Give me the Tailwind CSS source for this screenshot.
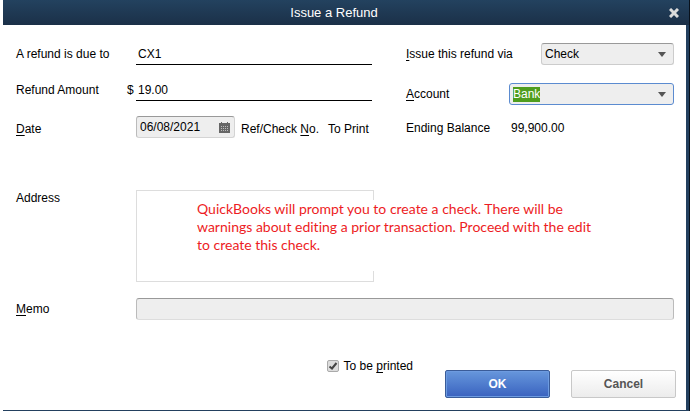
<!doctype html>
<html lang="en">
  <head>
    <meta charset="UTF-8" />
    <meta name="viewport" content="width=device-width, initial-scale=1.0" />
    <title>Issue a Refund</title>
    <script src="https://cdn.jsdelivr.net/npm/@tailwindcss/browser@4"></script>
  </head>
  <body class="bg-white pl-[3px] pr-px font-['Liberation_Sans',Arial,sans-serif] text-xs text-black">
    <div class="border-r border-[#08111c] bg-white">
      <header
        class="flex h-[25px] items-center bg-linear-to-b from-[#23425f] to-[#1b3048] text-white"
      >
        <h1 class="flex-1 text-center text-[13px]">Issue a Refund</h1>
        <button type="button" aria-label="Close" class="w-6 pl-1">
          <svg class="h-[10px] w-[10px]" viewBox="0 0 10 10" stroke="#dcdcdc" stroke-width="3">
            <path d="M1 1 9 9M9 1 1 9" />
          </svg>
        </button>
      </header>

      <form class="border-r-3 border-b border-[#23405f]">
        <div class="pt-[18px] pr-3 pl-[13px]">
          <div class="flex gap-8">
            <!-- Refund details -->
            <div class="w-[358px] shrink-0">
              <div class="flex h-[22px] items-center pr-0.5">
                <label for="payee" class="w-[120px]">A refund is due to</label>
                <input
                  id="payee"
                  value="CX1"
                  class="h-full min-w-0 flex-1 border-b border-black px-0.5 outline-none"
                />
              </div>

              <div class="mt-[14px] flex h-[22px] items-center pr-0.5">
                <label for="amount" class="w-[111px]">Refund Amount</label>
                <span class="w-[9px]">$</span>
                <input
                  id="amount"
                  value="19.00"
                  class="h-full min-w-0 flex-1 border-b border-black px-0.5 outline-none"
                />
              </div>

              <div class="mt-[15px] flex h-[22px] items-center">
                <label for="date" class="w-[120px] pt-1"><u class="underline-offset-2">D</u>ate</label>
                <div
                  class="flex h-full w-[99px] items-center rounded-[3px] border border-[#d4d4d4] border-t-[#999] border-l-[#bbb] bg-[#eee] pr-1 pl-[3px]"
                >
                  <input id="date" value="06/08/2021" class="min-w-0 flex-1 outline-none" />
                  <button type="button" aria-label="Pick a date">
                    <svg class="h-[11px] w-[11px]" viewBox="0 0 11 11">
                      <path fill="#666" d="M0 1h2V0h1v1h5V0h1v1h2v10H0z" />
                      <path
                        stroke="#bbb"
                        stroke-dasharray="1 1"
                        d="M2 4.5h8M2 6.5h8M2 8.5h8"
                      />
                    </svg>
                  </button>
                </div>
                <span class="pt-1 pl-1.5">Ref/Check <u class="underline-offset-2">N</u>o.</span>
                <span class="pt-1 pl-[9px]">To Print</span>
              </div>
            </div>

            <!-- Payment method -->
            <div class="min-w-0 flex-1">
              <div class="flex h-[22px] items-center">
                <label for="via" class="w-[135px]"><u class="underline-offset-2">I</u>ssue this refund via</label>
                <div
                  class="flex h-full flex-1 items-center rounded-[3px] border border-[#ccc] border-t-[#999] bg-[#eee] pr-[7px] pl-[3px]"
                >
                  <select id="via" class="min-w-0 flex-1 appearance-none outline-none">
                    <option>Check</option>
                  </select>
                  <svg class="h-[5px] w-2" viewBox="0 0 8 5"><path fill="#555" d="M0 0h8L4 5z" /></svg>
                </div>
              </div>

              <div class="mt-[18px] flex h-[22px] items-center">
                <label for="account" class="w-[103px]"><u class="underline-offset-2">A</u>ccount</label>
                <div
                  class="flex h-full flex-1 items-center justify-between rounded-[3px] border border-[#5b8bd0] bg-[#eee] pr-[7px] pl-[3px]"
                >
                  <select
                    id="account"
                    class="field-sizing-content h-[15px] appearance-none bg-[#4f9d1d] leading-[15px] text-white outline-none"
                  >
                    <option>Bank</option>
                  </select>
                  <svg class="h-[5px] w-2" viewBox="0 0 8 5"><path fill="#555" d="M0 0h8L4 5z" /></svg>
                </div>
              </div>

              <div class="mt-3 flex h-[22px] items-center">
                <span class="w-[105px]">Ending Balance</span>
                <span>99,900.00</span>
              </div>
            </div>
          </div>

          <div class="relative mt-[51px] flex">
            <label for="address" class="w-[120px] leading-4">Address</label>
            <textarea
              id="address"
              class="h-[92px] w-[238px] resize-none border border-[#ddd] outline-none"
            ></textarea>
            <!-- Help note laid over the address box -->
            <p
              class="absolute top-[10px] left-[181px] h-[71px] w-[420px] bg-white font-[Lato,sans-serif] text-sm leading-[18px] text-[#ed1c24] [font-variant-ligatures:none]"
            >
              QuickBooks will prompt you to create a check. There will be<br />
              warnings about editing a prior transaction. Proceed with the edit<br />
              to create this check.
            </p>
          </div>

          <div class="mt-4 flex h-[22px] items-center">
            <label for="memo" class="w-[120px]"><u class="underline-offset-2">M</u>emo</label>
            <input
              id="memo"
              class="h-full min-w-0 flex-1 rounded-[3px] border border-[#ddd] border-t-[#999] border-r-[#bbb] border-l-[#bbb] bg-[#eee] px-1 outline-none"
            />
          </div>
        </div>

        <div class="flex justify-end pt-[38px] pr-[10px] pb-3">
          <label class="mr-8 flex h-4 items-center gap-[5px]">
            <span class="relative flex">
              <input
                type="checkbox"
                checked
                class="h-3 w-3 appearance-none rounded-[2px] border border-[#aaa] bg-[#ddd]"
              />
              <svg
                class="pointer-events-none absolute inset-0 h-3 w-3"
                viewBox="0 0 12 12"
                fill="none"
                stroke="#444"
                stroke-width="2"
              >
                <path d="M2.5 6.5 5 8.5 9.5 3" />
              </svg>
            </span>
            <span>To be <u class="underline-offset-2">p</u>rinted</span>
          </label>
          <div class="mt-3 flex gap-[21px] font-bold">
            <button
              type="submit"
              class="h-7 w-[105px] rounded-[2px] border border-[#3a5c99] bg-linear-to-b from-[#6797dc] to-[#3a62bf] text-white shadow-[inset_0_0_0_1px_#6d9be0]"
            >
              OK
            </button>
            <button
              type="button"
              class="h-7 w-[105px] rounded-[2px] border border-[#c8c8c8] bg-linear-to-b from-white to-[#ececec] text-[#555]"
            >
              Cancel
            </button>
          </div>
        </div>
      </form>
    </div>
  </body>
</html>
